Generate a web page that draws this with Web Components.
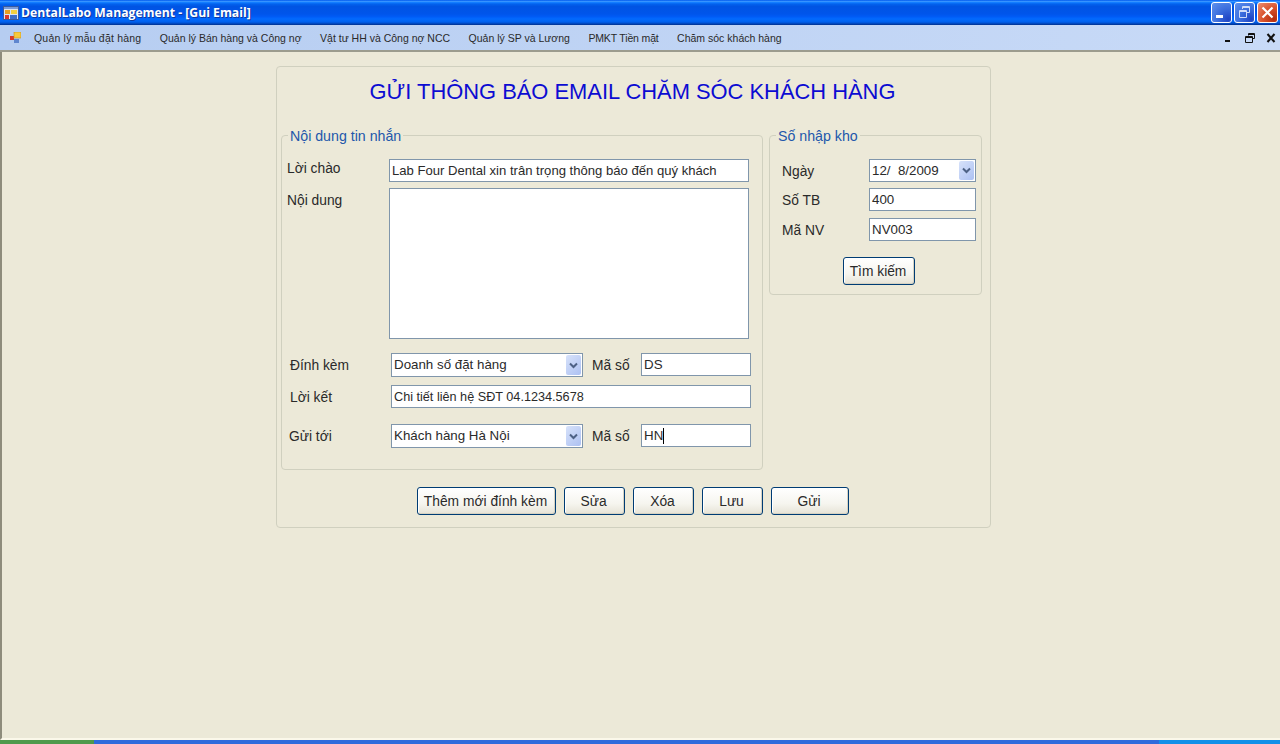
<!DOCTYPE html>
<html lang="vi">
<head>
<meta charset="utf-8">
<title>DentalLabo Management - [Gui Email]</title>
<style>
  html, body { margin: 0; height: 100%; overflow: hidden; background: #ece9d8; }
  body { display: flex; flex-direction: column; height: 744px; font-family: "Liberation Sans", Arial, sans-serif; }
</style>
</head>
<body>
<win-titlebar>DentalLabo Management - [Gui Email]</win-titlebar>
<win-menubar></win-menubar>
<gui-email-form></gui-email-form>
<win-taskstrip></win-taskstrip>

<script>
// Shared look of the small form controls
const FIELD_FONT = `font: 13.33px "Liberation Sans", Arial, sans-serif; color: #2a2a2a;`;
const FIELD_BORDER = '#8096ab';

class WinTitlebar extends HTMLElement {
  constructor() {
    super();
    this.attachShadow({ mode: 'open' });
    this.shadowRoot.innerHTML = `
      <style>
        :host {
          display: flex;
          align-items: center;
          flex: 0 0 25px;
          height: 25px;
          padding: 0 2px 0 3px;
          box-sizing: border-box;
          background: linear-gradient(180deg, #0058ee 0, #3593ff 6%, #127dff 10%, #0262ee 16%, #0054e3 26%, #0055eb 56%, #005bf5 66%, #026afe 76%, #0062ef 86%, #0052d6 92%, #0040ab 96%, #003092 100%);
        }
        svg { flex: none; display: block; }
        .text {
          flex: 1;
          margin-left: 2px;
          color: #fff;
          font: bold 12.2px "Open Sans", "Liberation Sans", sans-serif;
          white-space: nowrap;
          text-shadow: 1px 1px 0 #0f3aa0;
        }
        .btns { display: flex; gap: 2px; }
        .btn {
          width: 21px;
          height: 21px;
          box-sizing: border-box;
          border: 1px solid #fff;
          border-radius: 3px;
          background: radial-gradient(circle at 85% 85%, #1f44c4 0, #3a6cdc 45%, #5f92ee 100%);
        }
        .btn svg { width: 19px; height: 19px; }
        .close { background: radial-gradient(circle at 85% 85%, #b32c0e 0, #d9532d 50%, #ec9074 100%); }
      </style>
      <svg width="16" height="16" viewBox="0 0 16 16">
        <rect x="0.5" y="1.5" width="15" height="13" fill="#d9e4f4" stroke="#3b5a9a"/>
        <rect x="1" y="2" width="14" height="2" fill="#7a9bd8"/>
        <rect x="2" y="5" width="5" height="4" fill="#e8a020"/>
        <rect x="8" y="5" width="6" height="4" fill="#f4d040"/>
        <rect x="2" y="10" width="4" height="4" fill="#d83a2a"/>
        <rect x="7" y="10" width="7" height="4" fill="#3f6fc8"/>
      </svg>
      <span class="text"><slot></slot></span>
      <div class="btns">
        <div class="btn"><svg viewBox="0 0 19 19"><rect x="4" y="12" width="7" height="3" fill="#fff"/></svg></div>
        <div class="btn"><svg viewBox="0 0 19 19"><path d="M7.5 6v-2.5h7v6h-3M4.5 7.5h7v7h-7z M4.5 8.5h7 M7.5 4.5h7" fill="none" stroke="#cfdcf8" stroke-width="1"/></svg></div>
        <div class="btn close"><svg viewBox="0 0 19 19"><path d="M4.5 4.5l10 10M14.5 4.5l-10 10" stroke="#fff" stroke-width="2.2"/></svg></div>
      </div>
    `;
  }
}

class WinMenubar extends HTMLElement {
  constructor() {
    super();
    this.attachShadow({ mode: 'open' });
    const items = [
      'Quản lý mẫu đặt hàng',
      'Quản lý Bán hàng và Công nợ',
      'Vật tư HH và Công nợ NCC',
      'Quản lý SP và Lương',
      'PMKT Tiền mặt',
      'Chăm sóc khách hàng'
    ];
    this.shadowRoot.innerHTML = `
      <style>
        :host {
          display: flex;
          align-items: center;
          flex: 0 0 27px;
          height: 27px;
          padding: 0 3px 0 10px;
          box-sizing: border-box;
          background: linear-gradient(90deg, #b6cdf1, #c8daf7);
          border-bottom: 2px solid #9c9c8e;
          font: 10.5px "Liberation Sans", Arial, sans-serif;
          color: #2a2a2a;
        }
        svg { display: block; flex: none; }
        .items { display: flex; gap: 18.5px; margin-left: 13px; flex: 1; white-space: nowrap; }
        .items span:first-child { letter-spacing: 0.2px; }
        .items span:nth-child(5) { letter-spacing: -0.15px; }
        .mdi { display: flex; gap: 9px; }
      </style>
      <svg width="11" height="12" viewBox="0 0 11 12">
        <rect x="0" y="4" width="4" height="4" fill="#d8392a"/>
        <rect x="4" y="0" width="7" height="6" fill="#f6c93c" stroke="#c98f1a" stroke-width="0.6"/>
        <rect x="4" y="7" width="5" height="4" fill="#5f86cf"/>
      </svg>
      <div class="items">${items.map(t => `<span>${t}</span>`).join('')}</div>
      <div class="mdi">
        <svg width="12" height="12" viewBox="0 0 12 12"><rect x="2" y="8" width="5" height="2" fill="#111"/></svg>
        <svg width="12" height="12" viewBox="0 0 12 12"><path d="M4.5 3.5v-2h6v5h-2M1.5 4.5h7v6h-7z M1.5 5.5h7 M4.5 2.5h6" fill="none" stroke="#111"/></svg>
        <svg width="12" height="12" viewBox="0 0 12 12"><path d="M2.5 2l7 8M9.5 2l-7 8" stroke="#111" stroke-width="2"/></svg>
      </div>
    `;
  }
}

class GroupBox extends HTMLElement {
  constructor() {
    super();
    this.attachShadow({ mode: 'open' });
    this.shadowRoot.innerHTML = `
      <style>
        :host {
          display: block;
          position: relative;
          box-sizing: border-box;
          border: 1px solid #d0d0bf;
          border-radius: 4px;
        }
        .legend {
          position: absolute;
          top: -7px;
          left: 6px;
          padding: 0 2px;
          background: #ece9d8;
          color: #2257ab;
          font: 14.2px/15px "Liberation Sans", Arial, sans-serif;
          white-space: nowrap;
        }
      </style>
      <span class="legend"></span>
      <slot></slot>
    `;
  }
  connectedCallback() {
    this.shadowRoot.querySelector('.legend').textContent = this.getAttribute('legend') || '';
  }
}

class TextBox extends HTMLElement {
  constructor() {
    super();
    this.attachShadow({ mode: 'open' });
    this.shadowRoot.innerHTML = `
      <style>
        :host {
          display: flex;
          align-items: center;
          height: 23px;
          box-sizing: border-box;
          padding: 0 2px;
          background: #fff;
          border: 1px solid ${FIELD_BORDER};
          white-space: nowrap;
          overflow: hidden;
          ${FIELD_FONT}
        }
        :host([caret]) .caret { display: inline-block; }
        .caret { display: none; width: 1px; height: 16px; background: #000; }
      </style>
      <slot></slot><span class="caret"></span>
    `;
  }
}

class ComboBox extends HTMLElement {
  constructor() {
    super();
    this.attachShadow({ mode: 'open' });
    this.shadowRoot.innerHTML = `
      <style>
        :host {
          display: flex;
          align-items: center;
          height: 24px;
          box-sizing: border-box;
          padding: 0 1px 0 2px;
          background: #fff;
          border: 1px solid ${FIELD_BORDER};
          white-space: nowrap;
          ${FIELD_FONT}
        }
        .text { flex: 1; margin-top: -1px; }
        .arrow {
          display: flex;
          align-items: center;
          justify-content: center;
          width: 15px;
          height: calc(100% - 2px);
          border-radius: 2px;
          background: linear-gradient(135deg, #d7e2fa, #adc1f2);
        }
      </style>
      <span class="text"><slot></slot></span>
      <span class="arrow">
        <svg width="9" height="7" viewBox="0 0 9 7"><path d="M1 1.5l3.5 3.5 3.5-3.5" fill="none" stroke="#4d6185" stroke-width="2"/></svg>
      </span>
    `;
  }
}

class PushButton extends HTMLElement {
  constructor() {
    super();
    this.attachShadow({ mode: 'open' });
    this.shadowRoot.innerHTML = `
      <style>
        :host {
          display: flex;
          align-items: center;
          justify-content: center;
          height: 28px;
          box-sizing: border-box;
          padding-right: 2px;
          border: 1px solid #003c74;
          border-radius: 3px;
          background: linear-gradient(180deg, #fff 0, #f6f5ef 60%, #e6e3d6 100%);
          box-shadow: inset -1px -1px 0 #d6d2c2, inset 1px 1px 0 #fff;
          white-space: nowrap;
          font: 13.8px "Liberation Sans", Arial, sans-serif;
          color: #2a2a2a;
        }
      </style>
      <slot></slot>
    `;
  }
}

class WinTaskstrip extends HTMLElement {
  constructor() {
    super();
    this.attachShadow({ mode: 'open' });
    this.shadowRoot.innerHTML = `
      <style>
        :host {
          display: flex;
          flex: 0 0 4px;
          height: 4px;
          background: #2f6bdc;
        }
        .start { width: 94px; background: #4f9a4c; }
        .mid { flex: 1; }
        .tray { width: 121px; background: #1290e8; }
      </style>
      <div class="start"></div><div class="mid"></div><div class="tray"></div>
    `;
  }
}

class GuiEmailForm extends HTMLElement {
  constructor() {
    super();
    this.attachShadow({ mode: 'open' });
    this.shadowRoot.innerHTML = `
      <style>
        :host {
          display: block;
          flex: 1;
          box-sizing: border-box;
          padding: 14px 0 0 274px;
          border-left: 2px solid #8e8c7c;
          border-bottom: 2px solid #fbf8ea;
          font: 13.8px "Liberation Sans", Arial, sans-serif;
          color: #2a2a2a;
        }
        .panel {
          width: 715px;
          height: 462px;
          box-sizing: border-box;
          border: 1px solid #d0d0bf;
          border-radius: 4px;
          padding: 0 0 0 4px;
        }
        h1 {
          margin: 10px 0 0 -5px;
          height: 30px;
          text-align: center;
          font: 21.9px/30px "Liberation Sans", Arial, sans-serif;
          color: #0c0cd2;
          width: 713px;
        }
        .groups { display: flex; gap: 6px; margin-top: 28px; align-items: flex-start; }
        .g1 { width: 482px; height: 335px; padding-top: 23px; box-sizing: border-box; }
        .g2 { width: 213px; height: 160px; padding-top: 23px; box-sizing: border-box; }
        .row { display: flex; align-items: flex-start; }
        .row > * { flex: none; }
        .lbl { white-space: nowrap; }
        .top .lbl { width: 102px; margin-left: 5px; margin-top: 2px; }
        .top.second { margin-top: 6px; }
        .top.second .lbl { margin-top: 5px; }
        .wide { width: 360px; font-size: 13.1px; }
        .memo { width: 360px; height: 151px; background: #fff; border: 1px solid ${FIELD_BORDER}; box-sizing: border-box; }
        .low .lbl { width: 101px; margin-top: 5px; margin-left: 8px; }
        .low.first { margin-top: 14px; }
        .low.mid { margin-top: 8px; }
        .low.last { margin-top: 16px; }
        .low.last .lbl { margin-left: 7px; width: 102px; }
        .g1 combo-box { width: 192px; }
        .low .lbl.ma, .low.last .lbl.ma { margin-left: 9px; width: 49px; }
        .code { width: 110px; }
        .full { width: 360px; font-size: 12.67px; }
        .g2 .row { margin-left: 12px; }
        .g2 .row + .row { margin-top: 6px; }
        .g2 .row + .row + .row { margin-top: 7px; }
        .g2 .lbl { width: 87px; margin-top: 5px; }
        .g2 combo-box, .g2 text-box { width: 107px; height: 23px; }
        .g2 push-button { width: 72px; margin: 16px 0 0 73px; }
        .actions { display: flex; gap: 8px; margin: 17px 0 0 136px; }
      </style>
      <div class="panel">
        <h1>GỬI THÔNG BÁO EMAIL CHĂM SÓC KHÁCH HÀNG</h1>
        <div class="groups">
          <group-box class="g1" legend="Nội dung tin nhắn">
            <div class="row top"><span class="lbl">Lời chào</span><text-box class="wide">Lab Four Dental xin trân trọng thông báo đến quý khách</text-box></div>
            <div class="row top second"><span class="lbl">Nội dung</span><div class="memo"></div></div>
            <div class="row low first"><span class="lbl">Đính kèm</span><combo-box>Doanh số đặt hàng</combo-box><span class="lbl ma">Mã số</span><text-box class="code">DS</text-box></div>
            <div class="row low mid"><span class="lbl">Lời kết</span><text-box class="full">Chi tiết liên hệ SĐT 04.1234.5678</text-box></div>
            <div class="row low last"><span class="lbl">Gửi tới</span><combo-box>Khách hàng Hà Nội</combo-box><span class="lbl ma">Mã số</span><text-box class="code" caret>HN</text-box></div>
          </group-box>
          <group-box class="g2" legend="Số nhập kho">
            <div class="row"><span class="lbl">Ngày</span><combo-box>12/&nbsp;&nbsp;8/2009</combo-box></div>
            <div class="row"><span class="lbl">Số TB</span><text-box>400</text-box></div>
            <div class="row"><span class="lbl">Mã NV</span><text-box>NV003</text-box></div>
            <push-button>Tìm kiếm</push-button>
          </group-box>
        </div>
        <div class="actions">
          <push-button style="width:139px">Thêm mới đính kèm</push-button>
          <push-button style="width:61px">Sửa</push-button>
          <push-button style="width:61px">Xóa</push-button>
          <push-button style="width:61px">Lưu</push-button>
          <push-button style="width:78px">Gửi</push-button>
        </div>
      </div>
    `;
  }
}

customElements.define('win-titlebar', WinTitlebar);
customElements.define('win-menubar', WinMenubar);
customElements.define('group-box', GroupBox);
customElements.define('text-box', TextBox);
customElements.define('combo-box', ComboBox);
customElements.define('push-button', PushButton);
customElements.define('win-taskstrip', WinTaskstrip);
customElements.define('gui-email-form', GuiEmailForm);
</script>
</body>
</html>
